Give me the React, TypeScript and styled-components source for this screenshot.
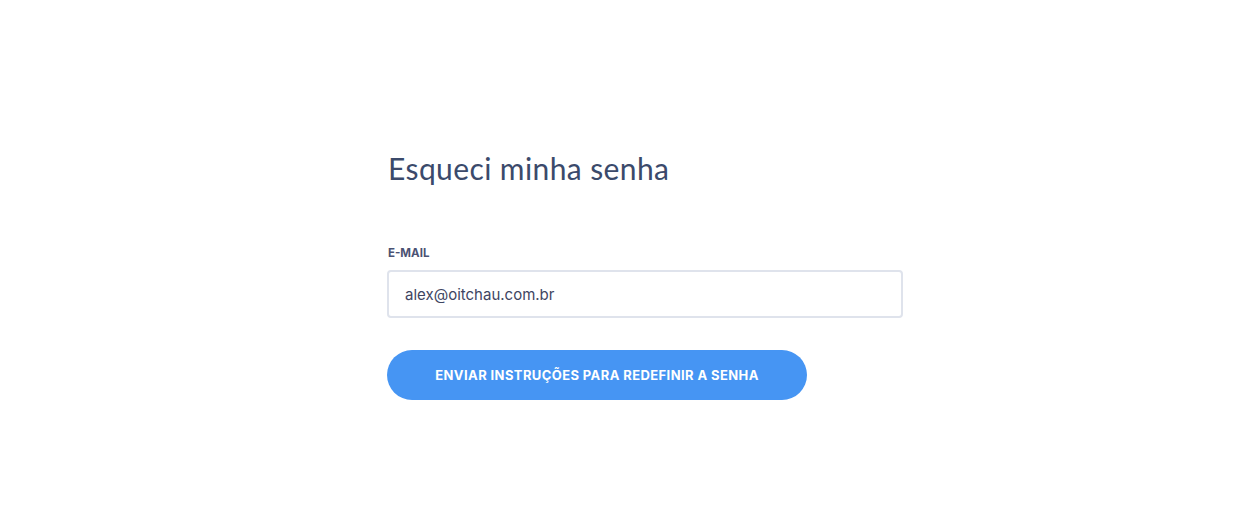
import React, {useState} from 'react';
import styled, {createGlobalStyle} from 'styled-components';

const GlobalStyle = createGlobalStyle`
  html, body {
    margin: 0;
    padding: 0;
    background: #fff;
    font-family: Lato, "Open Sans", "Liberation Sans", sans-serif;
  }
`;

const Page = styled.div`
  min-height: 521px;
  display: flex;
  padding: 148px 0 0 387px;
  box-sizing: border-box;
`;

const Form = styled.form`
  display: flex;
  flex-direction: column;
  width: 516px;
`;

const Title = styled.h1`
  margin: 0 0 58px 1px;
  font-size: 30px;
  line-height: 40px;
  font-weight: 400;
  color: #3b4a6b;
  letter-spacing: 0.4px;
`;

const Label = styled.label`
  font-family: Inter, "Liberation Sans", sans-serif;
  font-size: 11.5px;
  line-height: 14px;
  font-weight: 700;
  text-transform: uppercase;
  color: #4b5273;
  margin: 0 0 10px 1px;
`;

const Input = styled.input`
  box-sizing: border-box;
  width: 516px;
  height: 48px;
  border: 2px solid #dfe3ec;
  border-radius: 4px;
  padding: 0 16px;
  font-family: Inter, "Liberation Sans", sans-serif;
  font-size: 15px;
  color: #3e4562;
  outline: none;
  margin-bottom: 32px;
`;

const Button = styled.button`
  width: 420px;
  height: 50px;
  border: none;
  border-radius: 25px;
  background: #4695f3;
  color: #fff;
  font-family: Inter, "Liberation Sans", sans-serif;
  font-size: 13px;
  font-weight: 700;
  letter-spacing: 0.4px;
  text-transform: uppercase;
  cursor: pointer;
`;

function App() {
  const [email, setEmail] = useState('alex@oitchau.com.br');
  return (
    <>
      <GlobalStyle/>
      <Page>
        <Form onSubmit={e => e.preventDefault()}>
          <Title>Esqueci minha senha</Title>
          <Label htmlFor="email">E-mail</Label>
          <Input id="email" value={email} onChange={e => setEmail(e.target.value)}/>
          <Button type="submit">Enviar instruções para redefinir a senha</Button>
        </Form>
      </Page>
    </>
  );
}

export default App;
